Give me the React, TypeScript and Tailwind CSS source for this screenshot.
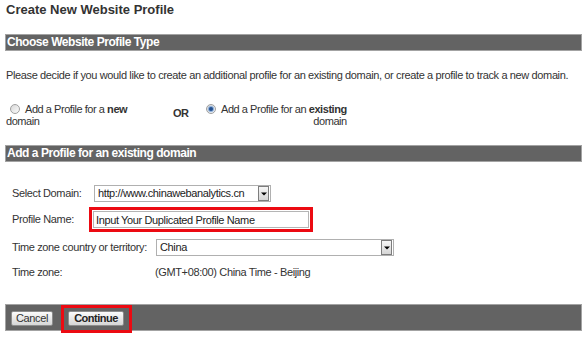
import { useState } from 'react';

function Bar({ children }: { children: React.ReactNode }) {
  return (
    <div className="mx-[5px] h-[17px] border border-[#a3a3a3] bg-[#636363] pl-[1px] text-[12px] font-bold leading-[15px] tracking-[-0.45px] text-white">
      {children}
    </div>
  );
}

function Arrow() {
  return (
    <span className="flex h-[15px] w-[11px] items-center justify-center border border-[#7d7d7d] bg-gradient-to-b from-[#f6f6f6] to-[#d6d6d6]">
      <svg width="6" height="4" viewBox="0 0 6 4">
        <path d="M0 0.5h6L3 3.5z" fill="#000" />
      </svg>
    </span>
  );
}

function Radio({ checked }: { checked: boolean }) {
  return (
    <span className="inline-block h-[10px] w-[10px] rounded-full border border-[#a0a0a0] bg-gradient-to-br from-[#d8d8d8] to-[#fbfbfb] align-[-1px]">
      {checked && (
        <span className="mx-auto mt-[2px] block h-[4px] w-[4px] rounded-full bg-[#24508f] shadow-[0_0_1px_1px_#7fa6d6]" />
      )}
    </span>
  );
}

export default function App() {
  const [mode, setMode] = useState<'new' | 'existing'>('existing');
  const [name, setName] = useState('Input Your Duplicated Profile Name');

  return (
    <div
      className="h-[341px] w-[587px] overflow-hidden bg-white text-[11px] leading-[13px] tracking-[-0.37px] text-[#333]"
      style={{ fontFamily: '"Liberation Sans", Arial, sans-serif' }}
    >
      <h1 className="px-[6px] pt-[2px] text-[13px] font-bold leading-[16px] tracking-normal text-[#333]">
        Create New Website Profile
      </h1>

      <div className="mt-[16px]">
        <Bar>Choose Website Profile Type</Bar>
      </div>

      <p className="mt-[18px] whitespace-nowrap px-[6px]">
        Please decide if you would like to create an additional profile for an existing domain, or create a profile to track a new domain.
      </p>

      {/* profile type choice */}
      <div className="mt-[21px] flex px-[6px] leading-[12px] tracking-[-0.45px]">
        <label className="w-[167px] cursor-pointer" onClick={() => setMode('new')}>
          <span className="ml-[4px] whitespace-nowrap">
            <Radio checked={mode === 'new'} />
            <span className="ml-[5px]">Add a Profile for a <b>new</b></span>
          </span>
          <br />
          domain
        </label>
        <div className="mt-[4px] w-[33px] font-bold">OR</div>
        <label className="cursor-pointer text-right" onClick={() => setMode('existing')}>
          <span className="whitespace-nowrap">
            <Radio checked={mode === 'existing'} />
            <span className="ml-[5px]">Add a Profile for an <b>existing</b></span>
          </span>
          <br />
          domain
        </label>
      </div>

      <div className="mt-[18px]">
        <Bar>Add a Profile for an existing domain</Bar>
      </div>

      <div className="mt-[23px] flex flex-col px-[12px]">
        <div className="flex h-[17px] items-center">
          <span className="w-[82px] whitespace-nowrap">Select Domain:</span>
          <div className="flex h-[17px] w-[177px] items-center justify-between border border-[#b0b0b0] pl-[3px] pr-[1px] text-[#222]">
            <span className="whitespace-nowrap">http://www.chinawebanalytics.cn</span>
            <Arrow />
          </div>
        </div>

        <div className="mt-[5px] flex h-[25px] items-center">
          <span className="w-[77px] whitespace-nowrap">Profile Name:</span>
          <div className="h-[25px] border-[3px] border-[#ec0a12] p-[1px]">
            <input
              value={name}
              onChange={(e) => setName(e.target.value)}
              className="block h-[17px] w-[216px] border border-[#b5b5b5] px-[2px] text-[11px] tracking-[-0.37px] text-[#222] outline-none"
            />
          </div>
        </div>

        <div className="mt-[7px] flex h-[17px] items-center">
          <span className="w-[144px] whitespace-nowrap">Time zone country or territory:</span>
          <div className="flex h-[17px] w-[238px] items-center justify-between border border-[#b0b0b0] pl-[3px] pr-[1px] text-[#222]">
            <span>China</span>
            <Arrow />
          </div>
        </div>

        <div className="mt-[10px] flex">
          <span className="w-[143px]">Time zone:</span>
          <span>(GMT+08:00) China Time - Beijing</span>
        </div>
      </div>

      {/* footer actions */}
      <div className="mx-[5px] mt-[25px] flex h-[27px] items-start border border-[#a3a3a3] bg-[#636363] pl-[5px]">
        <button className="mt-[6px] h-[15px] w-[42px] rounded-[2px] border border-[#8d8d8d] bg-gradient-to-b from-[#fbfbfb] to-[#d6d6d6] text-[11px] leading-[13px] text-[#333]">
          Cancel
        </button>
        <div className="ml-[8px] h-[28px] border-[3px] border-[#ec0a12] pl-[4px] pr-[5px] pt-[3px]">
          <button className="h-[15px] w-[56px] rounded-[2px] border border-[#8d8d8d] bg-gradient-to-b from-[#fbfbfb] to-[#d6d6d6] text-[11px] font-bold leading-[13px] tracking-[-0.5px] text-[#222]">
            Continue
          </button>
        </div>
      </div>
    </div>
  );
}
